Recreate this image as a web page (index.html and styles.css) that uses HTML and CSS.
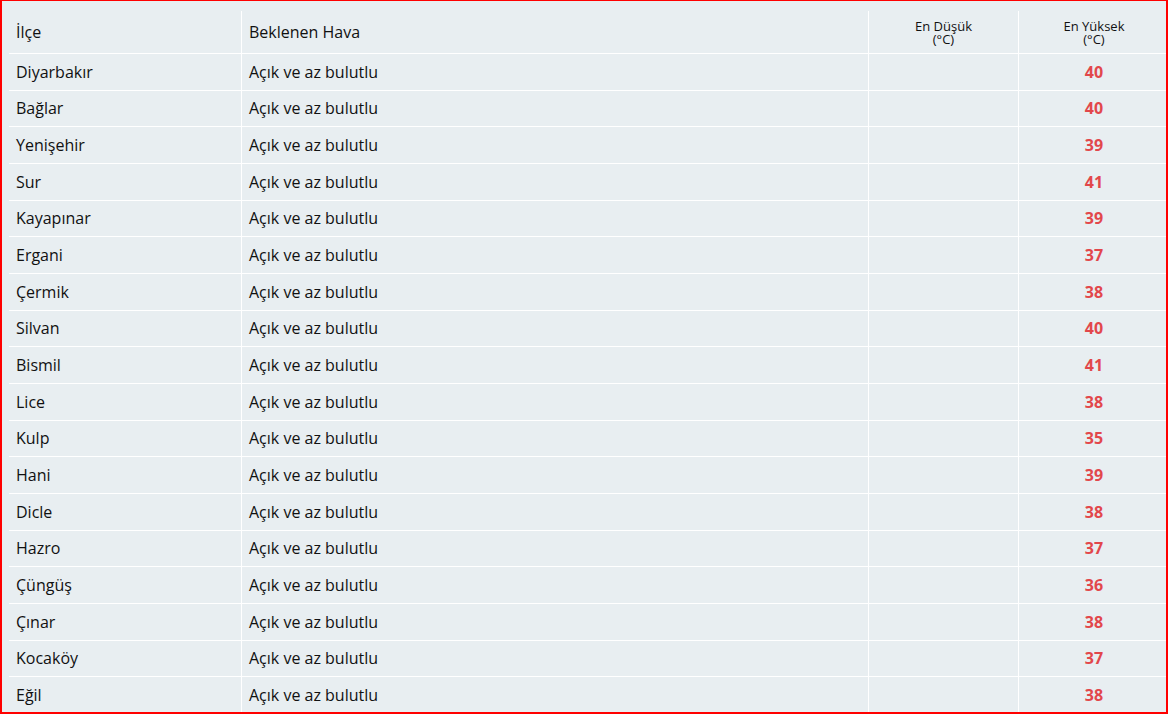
FILE: index.html
```html
<!DOCTYPE html>
<html lang="tr">
<head>
<meta charset="utf-8">
<title>Diyarbakır Hava Durumu</title>
<link rel="stylesheet" href="styles.css">
</head>
<body>
<div class="frame">
  <table class="weather">
    <colgroup>
      <col class="c-ilce">
      <col class="c-hava">
      <col class="c-min">
      <col class="c-max">
    </colgroup>
    <thead>
      <tr>
        <th class="h-left">İlçe</th>
        <th class="h-left">Beklenen Hava</th>
        <th class="h-small">En Düşük<br>(°C)</th>
        <th class="h-small last">En Yüksek<br>(°C)</th>
      </tr>
    </thead>
    <tbody>
      <tr><td>Diyarbakır</td><td>Açık ve az bulutlu</td><td></td><td class="max last">40</td></tr>
      <tr><td>Bağlar</td><td>Açık ve az bulutlu</td><td></td><td class="max last">40</td></tr>
      <tr><td>Yenişehir</td><td>Açık ve az bulutlu</td><td></td><td class="max last">39</td></tr>
      <tr><td>Sur</td><td>Açık ve az bulutlu</td><td></td><td class="max last">41</td></tr>
      <tr><td>Kayapınar</td><td>Açık ve az bulutlu</td><td></td><td class="max last">39</td></tr>
      <tr><td>Ergani</td><td>Açık ve az bulutlu</td><td></td><td class="max last">37</td></tr>
      <tr><td>Çermik</td><td>Açık ve az bulutlu</td><td></td><td class="max last">38</td></tr>
      <tr><td>Silvan</td><td>Açık ve az bulutlu</td><td></td><td class="max last">40</td></tr>
      <tr><td>Bismil</td><td>Açık ve az bulutlu</td><td></td><td class="max last">41</td></tr>
      <tr><td>Lice</td><td>Açık ve az bulutlu</td><td></td><td class="max last">38</td></tr>
      <tr><td>Kulp</td><td>Açık ve az bulutlu</td><td></td><td class="max last">35</td></tr>
      <tr><td>Hani</td><td>Açık ve az bulutlu</td><td></td><td class="max last">39</td></tr>
      <tr><td>Dicle</td><td>Açık ve az bulutlu</td><td></td><td class="max last">38</td></tr>
      <tr><td>Hazro</td><td>Açık ve az bulutlu</td><td></td><td class="max last">37</td></tr>
      <tr><td>Çüngüş</td><td>Açık ve az bulutlu</td><td></td><td class="max last">36</td></tr>
      <tr><td>Çınar</td><td>Açık ve az bulutlu</td><td></td><td class="max last">38</td></tr>
      <tr><td>Kocaköy</td><td>Açık ve az bulutlu</td><td></td><td class="max last">37</td></tr>
      <tr><td>Eğil</td><td>Açık ve az bulutlu</td><td></td><td class="max last">38</td></tr>
    </tbody>
  </table>
</div>
</body>
</html>
```

FILE: styles.css
```css
html, body {
  margin: 0;
  padding: 0;
}

body {
  font-family: "Open Sans", "Liberation Sans", sans-serif;
  color: #111;
  background: #e8eef1;
}

.frame {
  box-sizing: border-box;
  width: 1168px;
  height: 714px;
  overflow: hidden;
  background: #e8eef1;
  border-top: 1px solid #ff0000;
  border-left: 2px solid #ff0000;
  border-right: 2px solid #ff0000;
  border-bottom: 2px solid #ff0000;
  padding: 10px 0 0 7px;
}

.weather {
  width: 1160px;
  table-layout: fixed;
  border-collapse: separate;
  border-spacing: 0;
}

.c-ilce { width: 233px; }
.c-hava { width: 627px; }
.c-min  { width: 150px; }
.c-max  { width: 150px; }

.weather th,
.weather td {
  border-right: 1px solid #ffffff;
  border-bottom: 1px solid #ffffff;
  padding: 0 7px;
  font-size: 16px;
  font-weight: 400;
  vertical-align: middle;
  white-space: nowrap;
}

.weather th.last,
.weather td.last {
  border-right: none;
}

.weather th {
  height: 43px;
  box-sizing: border-box;
  line-height: 20px;
}

.weather .h-left {
  text-align: left;
  font-size: 16px;
}

.weather .h-small {
  text-align: center;
  font-size: 13px;
  line-height: 13px;
  padding-top: 1px;
}

.weather td {
  height: 35.67px;
  line-height: 22px;
}

.weather td.max {
  text-align: center;
  font-weight: 700;
  color: #e2474b;
}
```
